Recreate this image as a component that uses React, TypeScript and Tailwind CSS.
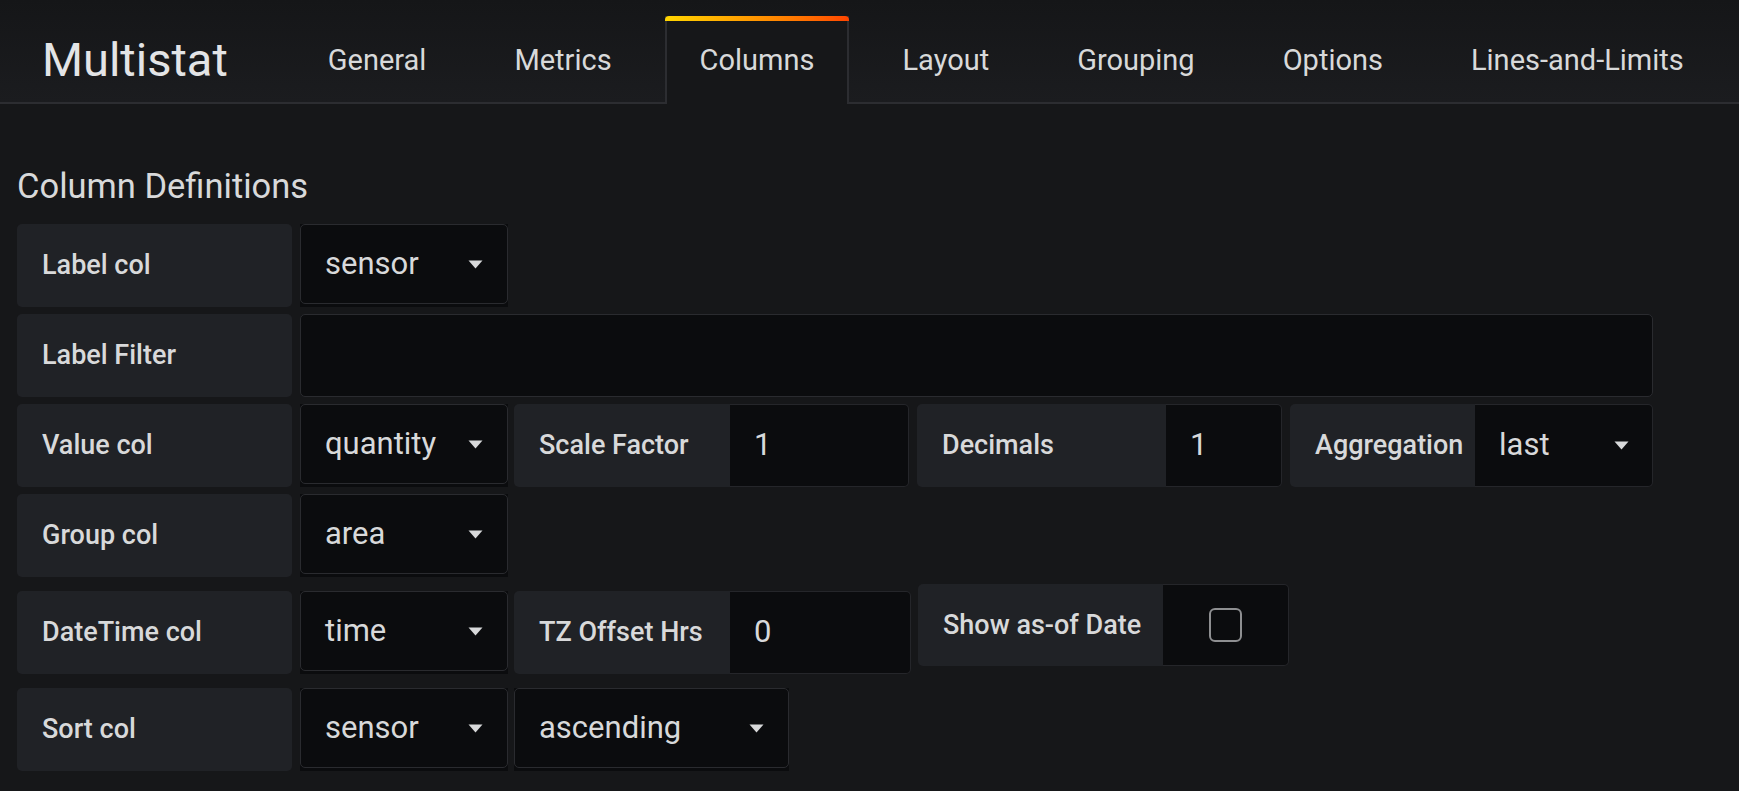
const tabs = ["General", "Metrics", "Columns", "Layout", "Grouping", "Options", "Lines-and-Limits"];

function Caret() {
  return (
    <svg width="15" height="9" viewBox="0 0 15 9" className="shrink-0">
      <path d="M0.5 0.5h14L7.5 8.5z" fill="#d8d9da" />
    </svg>
  );
}

function Label(props: { text: string; w: string; joined?: boolean }) {
  return (
    <div
      className={`${props.w} flex h-full shrink-0 items-center bg-[#202226] pl-[25px] text-[27px] font-medium text-[#d8d9da] ${
        props.joined ? "rounded-l-[5px]" : "rounded-[5px]"
      }`}
    >
      {props.text}
    </div>
  );
}

function Select(props: { value: string; w: string }) {
  return (
    <div className={`${props.w} h-[83px] shrink-0 bg-[#0b0c0e]`}>
      <div className="flex h-[80px] items-center justify-between rounded-[5px] border border-[#2a2b2f] pl-[24px] pr-[24px] text-[31px] text-[#d8d9da]">
        <span>{props.value}</span>
        <Caret />
      </div>
    </div>
  );
}

function Field(props: { label: string; lw: string; iw: string; value: string; select?: boolean }) {
  return (
    <div className="flex h-[83px] shrink-0">
      <Label text={props.label} w={props.lw} joined />
      <div
        className={`${props.iw} flex h-full items-center justify-between rounded-r-[5px] border border-l-0 border-[#25262a] bg-[#0b0c0e] pl-[24px] pr-[23px] text-[31px] text-[#d8d9da]`}
      >
        <span>{props.value}</span>
        {props.select && <Caret />}
      </div>
    </div>
  );
}

export default function App() {
  return (
    <div className="min-h-screen w-full bg-[#161719] font-['Roboto','Liberation_Sans',sans-serif] text-[#d8d9da]">
      {/* header with tabs */}
      <div className="flex h-[104px] items-end border-b-2 border-[#2c2d31] bg-linear-to-b from-[#151618] to-[#1b1c1f] pl-[42px]">
        <div className="mr-[65px] flex h-[88px] items-center pt-[4px] text-[47px] text-[#e3e4e6]">Multistat</div>
        <div className="flex items-end gap-[18px]">
          {tabs.map((t) =>
            t === "Columns" ? (
              <div key={t} className="-mb-[2px] flex h-[88px] flex-col border-x-2 border-[#2c2d31] bg-[#161719]">
                <div className="-mx-[2px] h-[5px] rounded-t-[4px] bg-linear-to-r from-[#ffd500] to-[#ff4400]" />
                <div className="flex flex-1 items-center px-[33px] pb-[3px] text-[29px]">{t}</div>
              </div>
            ) : (
              <div key={t} className="flex h-[86px] items-center px-[35px] pt-[4px] text-[29px]">
                {t}
              </div>
            )
          )}
        </div>
      </div>

      <div className="ml-[17px] mt-[62px] h-[40px] text-[34.5px] leading-[40px] text-[#d8d9da]">Column Definitions</div>

      <div className="ml-[17px] mt-[18px] flex w-[1636px] flex-col">
        <div className="flex flex-col gap-[7px]">
          <div className="flex h-[83px] gap-[8px]">
            <Label text="Label col" w="w-[275px]" />
            <Select value="sensor" w="w-[208px]" />
          </div>
          <div className="flex h-[83px] gap-[8px]">
            <Label text="Label Filter" w="w-[275px]" />
            <div className="flex-1 rounded-[5px] border border-[#2a2b2f] bg-[#0b0c0e]" />
          </div>
          <div className="flex h-[83px] gap-[8px]">
            <Label text="Value col" w="w-[275px]" />
            <Select value="quantity" w="w-[208px]" />
            <div className="-ml-[2px] flex gap-[8px]">
              <Field label="Scale Factor" lw="w-[216px]" iw="w-[179px]" value="1" />
              <Field label="Decimals" lw="w-[249px]" iw="w-[116px]" value="1" />
              <Field label="Aggregation" lw="w-[185px]" iw="w-[178px]" value="last" select />
            </div>
          </div>
          <div className="flex h-[83px] gap-[8px]">
            <Label text="Group col" w="w-[275px]" />
            <Select value="area" w="w-[208px]" />
          </div>
        </div>

        <div className="mt-[14px] flex h-[83px] gap-[8px]">
          <Label text="DateTime col" w="w-[275px]" />
          <Select value="time" w="w-[208px]" />
          <div className="-ml-[2px] flex gap-[7px]">
            <Field label="TZ Offset Hrs" lw="w-[216px]" iw="w-[181px]" value="0" />
            <div className="-mt-[7px] flex h-[82px] self-start">
              <Label text="Show as-of Date" w="w-[245px]" joined />
              <div className="flex h-full w-[126px] items-center justify-center rounded-r-[5px] border border-l-0 border-[#25262a] bg-[#0b0c0e]">
                <div className="h-[34px] w-[33px] rounded-[6px] border-2 border-[#8e8f91]" />
              </div>
            </div>
          </div>
        </div>

        <div className="mt-[14px] flex h-[83px] gap-[8px]">
          <Label text="Sort col" w="w-[275px]" />
          <Select value="sensor" w="w-[208px]" />
          <div className="-ml-[2px] flex">
            <Select value="ascending" w="w-[275px]" />
          </div>
        </div>
      </div>
    </div>
  );
}
